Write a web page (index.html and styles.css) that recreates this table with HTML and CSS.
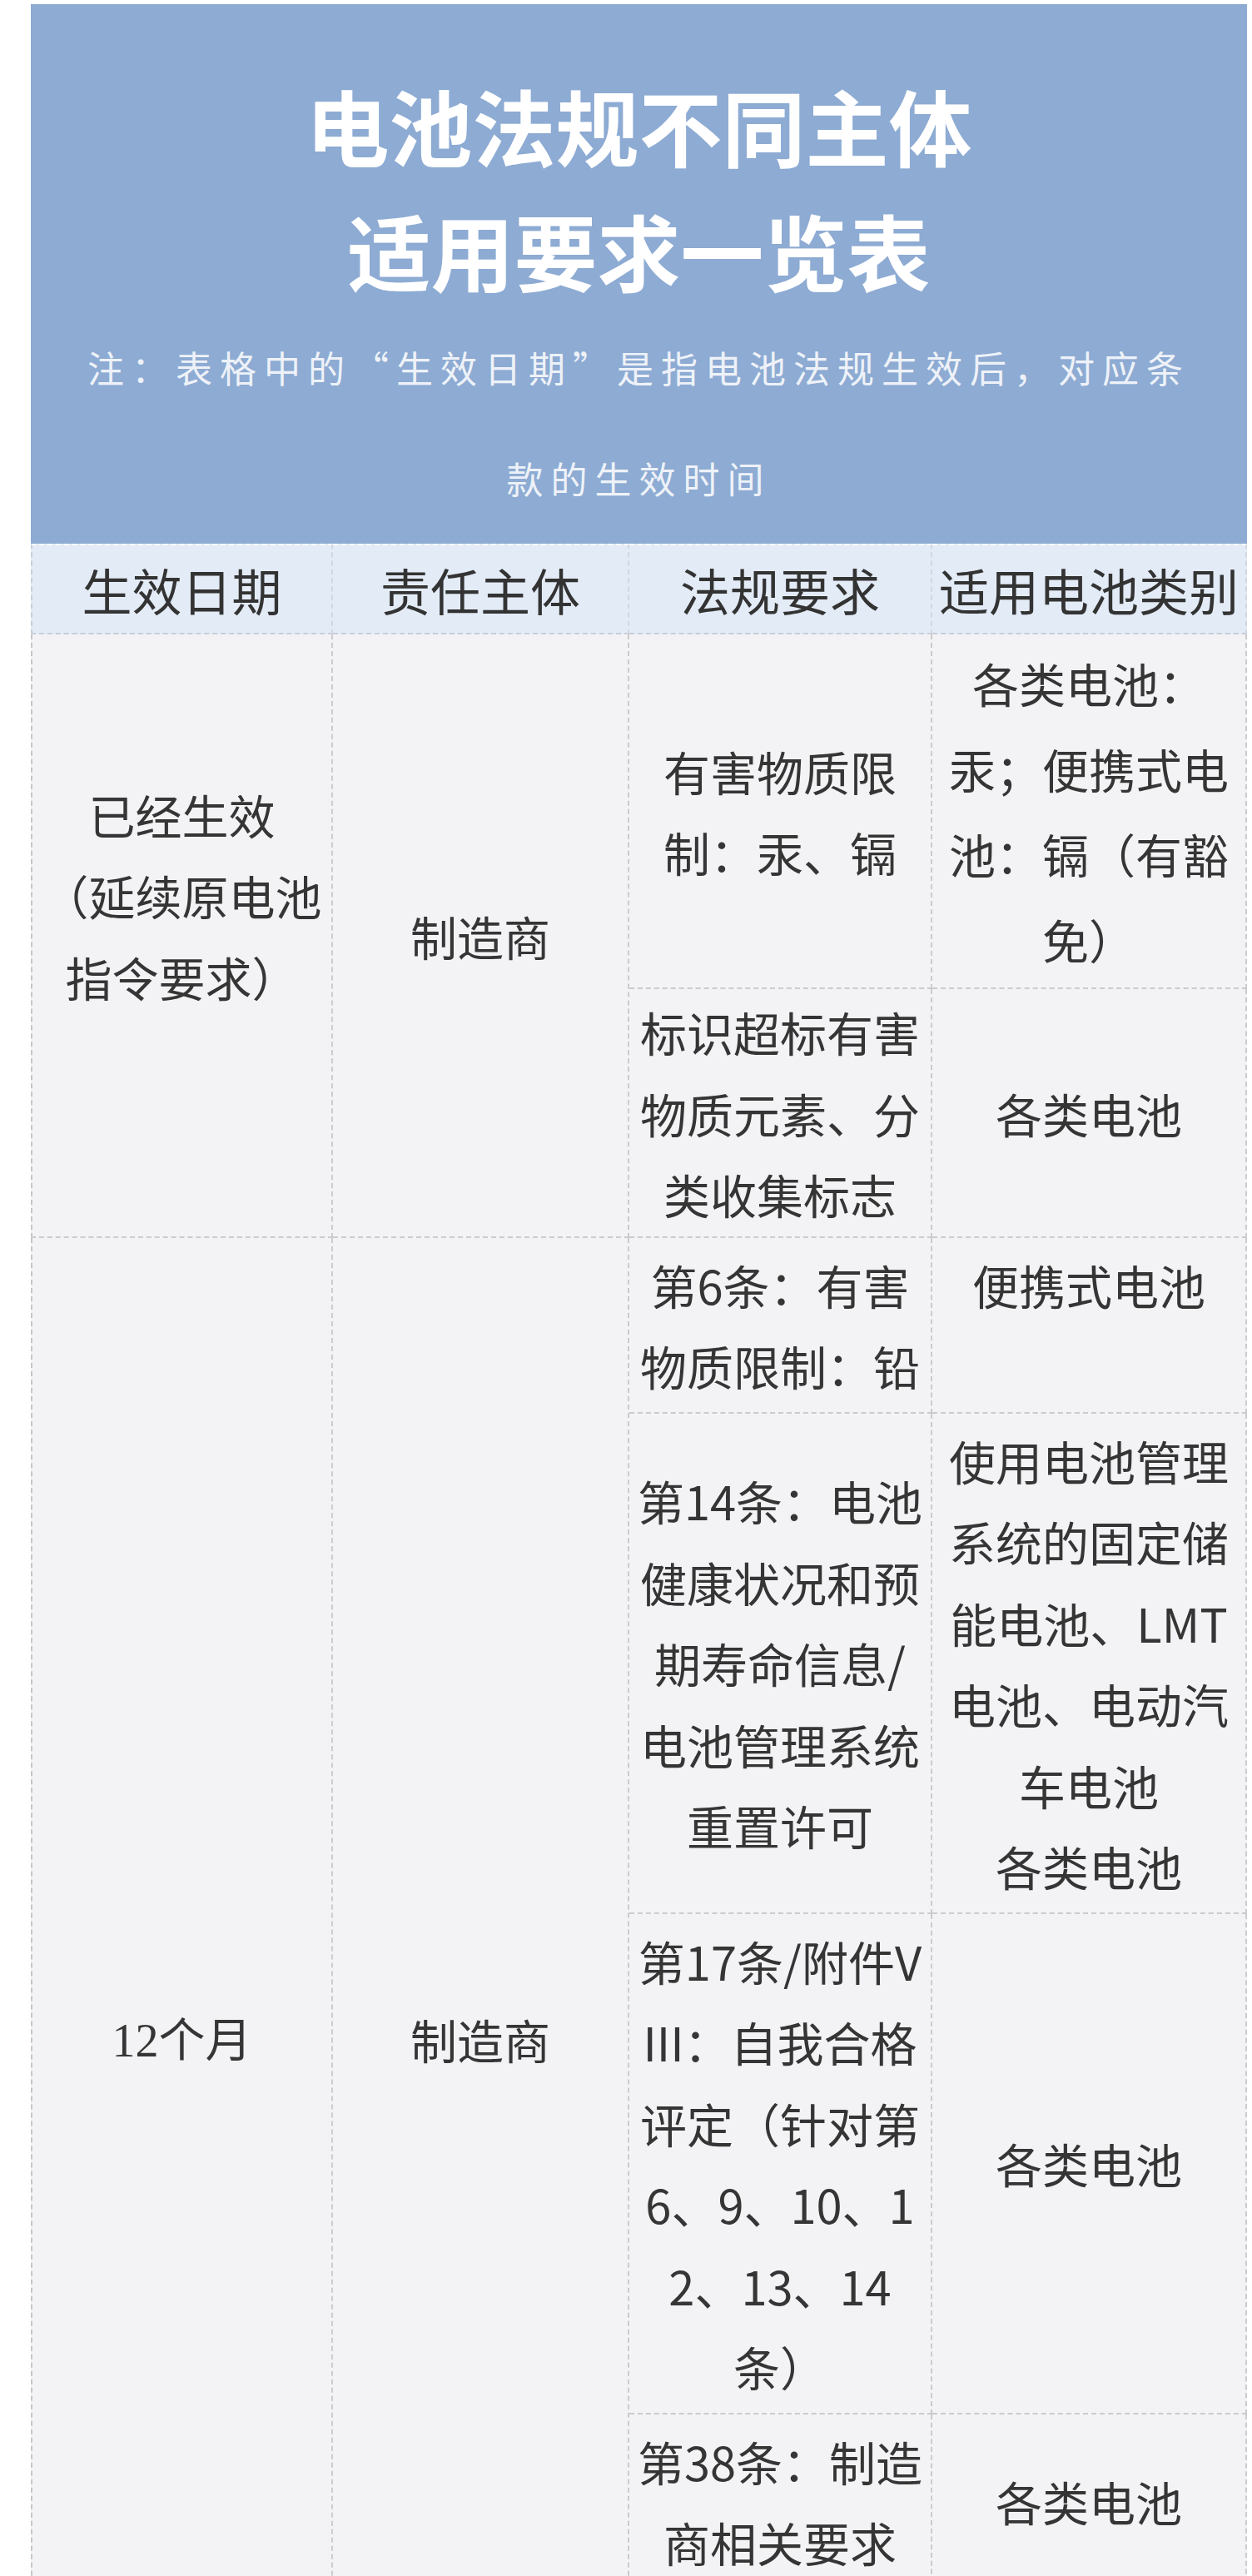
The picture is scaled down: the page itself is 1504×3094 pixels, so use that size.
FILE: index.html
```html
<!DOCTYPE html>
<html lang="zh-CN">
<head>
<meta charset="utf-8">
<title>电池法规不同主体适用要求一览表</title>
<link rel="stylesheet" href="styles.css">
</head>
<body>
<div class="page">
  <section class="banner">
    <h1 class="title">电池法规不同主体<br>适用要求一览表</h1>
    <p class="note">注：表格中的“生效日期”是指电池法规生效后，对应条款的生效时间</p>
  </section>
  <table class="grid">
    <colgroup>
      <col class="w1"><col class="w2"><col class="w3"><col class="w4">
    </colgroup>
    <thead>
      <tr class="head">
        <th>生效日期</th><th>责任主体</th><th>法规要求</th><th>适用电池类别</th>
      </tr>
    </thead>
    <tbody>
      <tr>
        <td rowspan="2" class="lift">已经生效<br>（延续原电池指令要求）</td>
        <td rowspan="2">制造商</td>
        <td>有害物质限制：汞、镉</td>
        <td class="loose">各类电池：汞；便携式电池：镉（有豁免）</td>
      </tr>
      <tr class="tight">
        <td>标识超标有害物质元素、分类收集标志</td>
        <td>各类电池</td>
      </tr>
      <tr>
        <td rowspan="5"><span class="num">12</span>个月</td>
        <td rowspan="5">制造商</td>
        <td>第6条：有害物质限制：铅</td>
        <td class="top">便携式电池</td>
      </tr>
      <tr>
        <td>第14条：电池健康状况和预期寿命信息/电池管理系统重置许可</td>
        <td>使用电池管理系统的固定储能电池、LMT电池、电动汽车电池<br>各类电池</td>
      </tr>
      <tr>
        <td>第17条/附件VIII：自我合格评定（针对第6、9、10、12、13、14条）</td>
        <td>各类电池</td>
      </tr>
      <tr>
        <td>第38条：制造商相关要求</td>
        <td>各类电池</td>
      </tr>
      <tr class="filler">
        <td></td>
        <td></td>
      </tr>
    </tbody>
  </table>
</div>
</body>
</html>
```
FILE: styles.css
```css
html, body {
  margin: 0;
  padding: 0;
  background: #ffffff;
}

body {
  font-family: "Noto Sans CJK SC", "Noto Sans", sans-serif;
  color: #353535;
}

.page {
  margin: 5px 6px 0 37px;
  width: 1461px;
}

.banner {
  background: #8dabd3;
  padding: 70px 50px 12px;
  text-align: center;
}

.title {
  margin: 0;
  font-size: 100px;
  line-height: 150px;
  font-weight: 700;
  color: #ffffff;
}

.note {
  margin: 0;
  font-size: 44px;
  line-height: 133px;
  letter-spacing: 9px;
  color: #eef2f8;
}

.grid {
  width: 1461px;
  table-layout: fixed;
  border-collapse: separate;
  border-spacing: 0;
}

.w1 { width: 363px; }
.w2 { width: 356px; }
.w3 { width: 364px; }
.w4 { width: 378px; }

.head th {
  background: #e3ebf6;
  font-weight: 400;
  font-size: 60px;
  line-height: 105px;
  padding: 0 2px;
  color: #333333;
  border-top: 2px dashed #ffffff;
  border-right: 2px dashed #d0d7e1;
  border-bottom: 2px dashed #c9ced6;
  white-space: nowrap;
}

.head th:first-child {
  border-left: 2px dashed #c9cfd8;
}

.grid td {
  background: #f3f3f5;
  font-size: 56px;
  line-height: 97.5px;
  padding: 7px 8px;
  text-align: center;
  vertical-align: middle;
  word-break: break-all;
  border-right: 2px dashed #cbcbcf;
  border-bottom: 2px dashed #cbcbcf;
}

.grid tbody tr:first-child td:first-child,
.grid tbody tr:nth-child(3) td:first-child {
  border-left: 2px dashed #c6c6ca;
}

.grid td.lift {
  padding-bottom: 104px;
}

.grid td.loose {
  line-height: 102.5px;
}

.grid tr.tight td {
  padding-top: 2px;
  padding-bottom: 2px;
}

.grid td.top {
  vertical-align: top;
}

.num {
  font-family: "Liberation Serif", serif;
}

.grid tr.filler td {
  height: 287px;
}
```
